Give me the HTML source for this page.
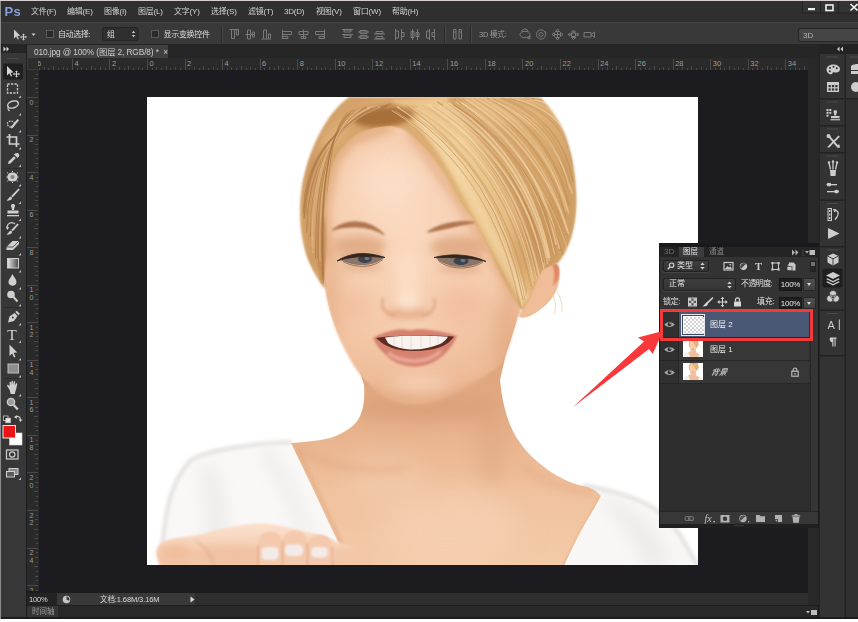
<!DOCTYPE html>
<html lang="zh-CN">
<head>
<meta charset="utf-8">
<title>Photoshop</title>
<style>
*{box-sizing:border-box;margin:0;padding:0}
html,body{width:858px;height:622px;overflow:hidden;background:#1c1b1f}
body{position:relative;font-family:"Liberation Sans","Noto Sans CJK SC",sans-serif;font-size:8px;color:#d6d6d6;line-height:1}
.abs{position:absolute}
#menubar,#tabbar,#statusbar,#timeline,#layers{will-change:transform}
#toolbar svg,#dock svg,#optbar svg{filter:blur(0.3px)}
#topline{left:0;top:0;width:858px;height:1px;background:#d8d0d0}
#menubar{left:0;top:1px;width:858px;height:21px;background:#2e2f2e}
#menubar span{position:absolute;top:7px;font-size:8px;color:#d2d2d2;white-space:nowrap;letter-spacing:-0.2px}
#ps{left:4.5px;top:4px;font-size:13px;font-weight:bold;color:#869fdb;letter-spacing:0.3px;font-family:"Liberation Sans",sans-serif}
#optbar{left:0;top:22px;width:858px;height:23px;background:#393939;border-top:1px solid #444;border-bottom:1px solid #252525}
#tabbar{left:27px;top:45px;width:792px;height:13px;background:#262626}
#tab{left:0;top:0px;width:141px;height:13px;background:#404040;font-size:8.3px;color:#cfcfcf;white-space:nowrap;padding:3px 0 0 7px;letter-spacing:-0.1px}
#hruler{left:27px;top:58px;width:781px;height:12px;background:#2a2a2a;overflow:hidden}
#vruler{left:27px;top:70px;width:12px;height:521px;background:#2a2a2a;overflow:hidden}
#canvas{left:38px;top:70px;width:770px;height:521px;background:#1c1b1f}
#toolbar{left:0;top:45px;width:26px;height:572px;background:#373737}
#toolhead{left:0;top:0;width:26px;height:8px;background:#252525}
#statusbar{left:27px;top:592.5px;width:781px;height:12px;background:#2e2e2e}
#timeline{left:27px;top:604.5px;width:791px;height:12.5px;background:#282828;border-top:1px solid #1e1e1e}
#bottom{left:0;top:617px;width:858px;height:5px;background:#fff;border-top:2.5px solid #1c1c1c}
#vscroll{left:808px;top:58px;width:11px;height:547px;background:#282828}
#dock{left:819px;top:45px;width:39px;height:572px;background:#242424}
#photo{left:147px;top:97px;width:551px;height:468px;background:#fff;overflow:hidden}
#layers{left:659px;top:243px;width:160px;height:285px;background:#2e2e2f;border:1px solid #1a1a1a}
</style>
</head>
<body>
<div class="abs" id="canvas"></div>
<div class="abs" id="photo"><svg width="551" height="468" viewBox="147 97 551 468" style="position:absolute;left:0;top:0">
<defs>
<filter id="b05" x="-5%" y="-5%" width="110%" height="110%"><feGaussianBlur stdDeviation="0.55"/></filter>
<filter id="b1" x="-20%" y="-20%" width="140%" height="140%"><feGaussianBlur stdDeviation="0.8"/></filter>
<filter id="b2" x="-40%" y="-60%" width="180%" height="220%"><feGaussianBlur stdDeviation="1.6"/></filter>
<filter id="b3" x="-20%" y="-20%" width="140%" height="140%"><feGaussianBlur stdDeviation="2.5"/></filter>
<filter id="b4" x="-50%" y="-150%" width="200%" height="400%"><feGaussianBlur stdDeviation="4"/></filter>
<filter id="b8" x="-60%" y="-100%" width="220%" height="300%"><feGaussianBlur stdDeviation="8"/></filter>
<filter id="b14" x="-50%" y="-50%" width="200%" height="200%"><feGaussianBlur stdDeviation="14"/></filter>
<linearGradient id="gHair" x1="0" y1="0" x2="1" y2="0.45">
<stop offset="0" stop-color="#cf9b64"/><stop offset="0.3" stop-color="#d9a970"/><stop offset="0.65" stop-color="#e0b47a"/><stop offset="1" stop-color="#d3a46a"/>
</linearGradient>
<linearGradient id="gFringe" x1="0" y1="0" x2="1" y2="0.3">
<stop offset="0" stop-color="#e8bf84"/><stop offset="0.45" stop-color="#f0cd97"/><stop offset="1" stop-color="#e2b67c"/>
</linearGradient>
<linearGradient id="gNeck" gradientUnits="userSpaceOnUse" x1="0" y1="380" x2="0" y2="565">
<stop offset="0" stop-color="#e0a77f"/><stop offset="0.3" stop-color="#e8b48e"/><stop offset="0.6" stop-color="#f0c29e"/><stop offset="1" stop-color="#f4caa8"/>
</linearGradient>
<radialGradient id="gFace" gradientUnits="userSpaceOnUse" cx="405" cy="225" r="190">
<stop offset="0" stop-color="#fad9c0"/><stop offset="0.55" stop-color="#f5cbab"/><stop offset="1" stop-color="#eab48f"/>
</radialGradient>
<linearGradient id="gHand" gradientUnits="userSpaceOnUse" x1="0" y1="523" x2="0" y2="565">
<stop offset="0" stop-color="#fbe2cf"/><stop offset="1" stop-color="#f2c4a5"/>
</linearGradient>
<clipPath id="cpPhoto"><rect x="147" y="97" width="551" height="468"/></clipPath>

<clipPath id="cpFace"><path d="M326,205 C328,186 331,171 335,161 C340,151 346,144 351,140 C357,135 363,132 369,130 C377,127 385,126 391,126 C397,127 402,128 406,131 C414,138 423,147 431,157 C437,165 442,172 446,178 C450,186 453,192 457,199 C462,207 466,212 471,218 C478,230 484,242 490,253 C494,262 498,270 502,278 C507,287 512,295 517,303 L521,312 L517,319 C514,330 510,343 506,354 C503,362 498,368 490,372 C480,379 470,384 460,389 C450,395 440,399 428,402 C418,404 408,404 400,402 C392,400 386,397 380,392 C373,387 367,382 362,377 C358,372 355,368 352,363 C348,356 344,348 341,342 C338,335 335,328 333,321 C330,312 328,304 326,294 C324,280 325,268 326,258 C327,240 326,222 326,205 Z"/></clipPath>
<clipPath id="cpHair"><path d="M349,97 C338,105 329,116 322,129 C315,141 309,156 305,172 C300,190 299,210 301,230 C303,245 306,256 311,266 C315,275 319,281 324,288 C325,278 325,268 326,258 C327,240 326,222 326,205 C328,186 331,171 335,161 C340,151 346,144 351,140 C357,135 363,132 369,130 C377,127 385,126 391,126 C397,127 402,128 406,131 C414,138 423,147 431,157 C437,165 442,172 446,178 C450,186 453,192 457,199 C462,207 466,212 471,218 C478,230 484,242 490,253 C494,262 498,270 502,278 C507,287 512,295 517,303 L522,310 C530,300 536,280 542,270 C548,266 554,264 558,263 C564,256 569,246 572,234 C576,220 577,205 576,190 C575,170 571,150 565,134 C559,120 551,108 540,97 Z"/></clipPath>
<clipPath id="cpNeck"><path d="M350,340 L364,385 C365,398 364,410 358,420 C352,428 342,434 330,438 C318,441 304,442 291,443 C300,462 312,486 322,508 C332,530 342,550 350,566 L564,566 C570,552 578,536 586,522 C592,512 597,503 601,496 C596,490 590,487 583,486 C570,483 558,477 548,470 C536,461 526,452 518,440 C510,428 505,412 502,396 L500,380 L506,354 L517,319 L480,300 Z"/></clipPath>
</defs>
<g clip-path="url(#cpPhoto)">
<rect x="147" y="97" width="551" height="468" fill="#ffffff"/>
<g filter="url(#b05)">
<path d="M161,566 C162,545 164,525 168,505 C172,488 180,472 190,461 C202,452 228,448 252,445 C268,443 280,442.500 292,442 L352,566 Z" fill="#f9f8f7"/>
<path d="M583,485 C600,488 620,493 638,500 C655,507 668,518 678,532 C686,544 692,556 698,566 L560,566 L602,496 Z" fill="#f8f7f6"/>
<path d="M161,566 C162,545 164,525 168,505 C172,488 180,472 190,461 C202,452 228,448 252,445 C268,443 280,442.500 292,442" stroke="#e4e2e0" stroke-width="5" fill="none" opacity="0.8" filter="url(#b2)"/>
<path d="M583,485 C600,488 620,493 638,500 C655,507 668,518 678,532 C686,544 692,556 698,566" stroke="#e4e2e0" stroke-width="5" fill="none" opacity="0.8" filter="url(#b2)"/>
<path d="M196,470 C206,495 208,530 200,566 L226,566 C232,530 228,495 216,465 Z" fill="#efedeb" filter="url(#b8)"/>
<path d="M255,450 C275,480 290,510 300,540 L316,540 C303,500 290,470 273,448 Z" fill="#f1efed" filter="url(#b8)"/>
<path d="M600,500 C620,520 636,540 644,566 L672,566 C660,535 640,510 606,498 Z" fill="#edebe9" filter="url(#b8)"/>
<path d="M350,340 L364,385 C365,398 364,410 358,420 C352,428 342,434 330,438 C318,441 304,442 291,443 C300,462 312,486 322,508 C332,530 342,550 350,566 L564,566 C570,552 578,536 586,522 C592,512 597,503 601,496 C596,490 590,487 583,486 C570,483 558,477 548,470 C536,461 526,452 518,440 C510,428 505,412 502,396 L500,380 L506,354 L517,319 L480,300 Z" fill="url(#gNeck)"/>
<g clip-path="url(#cpNeck)">
<ellipse cx="425" cy="408" rx="75" ry="13" fill="#d59a72" opacity="0.6" filter="url(#b8)"/>
<ellipse cx="492" cy="440" rx="16" ry="45" fill="#dca47c" opacity="0.45" filter="url(#b8)"/>
<ellipse cx="450" cy="530" rx="70" ry="40" fill="#f7d2b4" opacity="0.7" filter="url(#b14)"/>
<ellipse cx="385" cy="480" rx="40" ry="25" fill="#f4cdae" opacity="0.6" filter="url(#b14)"/>
<path d="M296,448 C325,466 360,474 405,468" stroke="#dca079" stroke-width="5" fill="none" opacity="0.55" filter="url(#b4)"/>
<path d="M594,492 C565,490 540,480 522,466" stroke="#dca079" stroke-width="5" fill="none" opacity="0.5" filter="url(#b4)"/>
<path d="M352,566 L298,450" stroke="#dfa780" stroke-width="4" fill="none" opacity="0.5" filter="url(#b2)"/>
<path d="M564,566 L600,498" stroke="#dfa780" stroke-width="4" fill="none" opacity="0.5" filter="url(#b2)"/>
</g>
<path d="M522,310 C528,292 536,274 546,266 C552,262 558,262 559,268 C561,278 558,290 552,298 C546,306 538,312 530,316 C526,318 522,318 519,317 Z" fill="#efbd98"/>
<path d="M552,264 C557,262 560,266 559,274 C558,280 556,284 553,286 C555,278 555,270 552,264 Z" fill="#e08364" filter="url(#b1)"/>
<path d="M556,290 C560,296 563,304 562,312 M553,296 C556,302 556,308 554,314" stroke="#e5c39a" stroke-width="0.9" fill="none" opacity="0.7"/>
<path d="M349,97 C338,105 329,116 322,129 C315,141 309,156 305,172 C300,190 299,210 301,230 C303,245 306,256 311,266 C315,275 319,281 324,288 L522,310 C530,300 536,280 542,270 C548,266 554,264 558,263 C564,256 569,246 572,234 C576,220 577,205 576,190 C575,170 571,150 565,134 C559,120 551,108 540,97 Z" fill="url(#gHair)" filter="url(#b1)"/>
<path d="M326,205 C328,186 331,171 335,161 C340,151 346,144 351,140 C357,135 363,132 369,130 C377,127 385,126 391,126 C397,127 402,128 406,131 C414,138 423,147 431,157 C437,165 442,172 446,178 C450,186 453,192 457,199 C462,207 466,212 471,218 C478,230 484,242 490,253 C494,262 498,270 502,278 C507,287 512,295 517,303 L521,312 L517,319 C514,330 510,343 506,354 C503,362 498,368 490,372 C480,379 470,384 460,389 C450,395 440,399 428,402 C418,404 408,404 400,402 C392,400 386,397 380,392 C373,387 367,382 362,377 C358,372 355,368 352,363 C348,356 344,348 341,342 C338,335 335,328 333,321 C330,312 328,304 326,294 C324,280 325,268 326,258 C327,240 326,222 326,205 Z" fill="url(#gFace)" filter="url(#b1)"/>
<g clip-path="url(#cpFace)">
<ellipse cx="328" cy="290" rx="12" ry="60" fill="#dfa47a" opacity="0.55" filter="url(#b8)"/>
<ellipse cx="508" cy="345" rx="14" ry="50" fill="#dfa47b" opacity="0.55" filter="url(#b8)"/>
<ellipse cx="425" cy="400" rx="70" ry="10" fill="#dfa47b" opacity="0.6" filter="url(#b8)"/>
<ellipse cx="388" cy="182" rx="36" ry="30" fill="#fde2cc" opacity="0.7" filter="url(#b14)"/>
<ellipse cx="408" cy="280" rx="10" ry="32" fill="#fde2cb" opacity="0.85" filter="url(#b8)"/>
<ellipse cx="462" cy="305" rx="24" ry="18" fill="#f0b595" opacity="0.5" filter="url(#b8)"/>
<ellipse cx="354" cy="305" rx="16" ry="16" fill="#f0b595" opacity="0.45" filter="url(#b8)"/>
<ellipse cx="420" cy="384" rx="30" ry="9" fill="#fad9c1" opacity="0.7" filter="url(#b8)"/>
<ellipse cx="412" cy="322" rx="22" ry="5" fill="#fbdcc5" opacity="0.6" filter="url(#b4)"/>
<ellipse cx="360" cy="246" rx="26" ry="11" fill="#dca37c" opacity="0.75" filter="url(#b4)"/>
<ellipse cx="458" cy="247" rx="28" ry="11" fill="#dca37c" opacity="0.75" filter="url(#b4)"/>
<ellipse cx="362" cy="266" rx="20" ry="5" fill="#d69c76" opacity="0.6" filter="url(#b4)"/>
<ellipse cx="460" cy="268" rx="22" ry="5" fill="#d69c76" opacity="0.6" filter="url(#b4)"/>
<path d="M410,132 L457,199 L490,253 L517,303" stroke="#e2a57c" stroke-width="9" fill="none" opacity="0.65" filter="url(#b4)"/>
<path d="M325,260 L325,205 L334,162 L351,140 L391,126" stroke="#dda574" stroke-width="10" fill="none" opacity="0.75" filter="url(#b4)"/>
</g>
<path d="M372,384 C375,388 377,390 380,392 C392,400 408,404 428,402 C445,398 465,387 486,375" stroke="#e6b08a" stroke-width="5" fill="none" opacity="0.7" filter="url(#b3)"/>
<g clip-path="url(#cpHair)">
<path d="M392,100 C420,125 445,160 460,190 C478,225 500,265 522,308 L552,290 C540,255 522,210 500,170 C484,140 462,115 446,97 Z" fill="url(#gFringe)" filter="url(#b2)"/>
<path d="M452,97 C476,125 500,165 518,205 C532,235 545,262 553,288" stroke="#c48f56" stroke-width="13" fill="none" opacity="0.55" filter="url(#b4)"/>
<path d="M420,118 C445,145 470,190 490,230 C503,256 515,280 526,300" stroke="#f6dcae" stroke-width="9" fill="none" opacity="0.6" filter="url(#b3)"/>
<ellipse cx="384" cy="117" rx="30" ry="10" fill="#a56c38" opacity="0.95" filter="url(#b3)" transform="rotate(-6 384 117)"/>
<ellipse cx="313" cy="215" rx="8" ry="62" fill="#c48c58" opacity="0.55" filter="url(#b4)"/>
<ellipse cx="322" cy="250" rx="4" ry="35" fill="#b67c4a" opacity="0.6" filter="url(#b2)"/>
<ellipse cx="335" cy="135" rx="18" ry="8" fill="#e2b580" opacity="0.7" filter="url(#b4)" transform="rotate(-50 335 135)"/>
<ellipse cx="540" cy="235" rx="22" ry="40" fill="#c8935a" opacity="0.7" filter="url(#b8)" transform="rotate(15 540 235)"/>
<ellipse cx="525" cy="160" rx="26" ry="50" fill="#d2a068" opacity="0.55" filter="url(#b8)" transform="rotate(-30 525 160)"/>
<ellipse cx="569" cy="200" rx="7" ry="45" fill="#cf9d66" opacity="0.7" filter="url(#b4)"/>
<ellipse cx="500" cy="112" rx="45" ry="10" fill="#e6bd86" opacity="0.6" filter="url(#b4)" transform="rotate(12 500 112)"/>
<g filter="url(#b05)">
<path d="M391.7,110.4 Q495.1,174.0 522.5,305.7" stroke="#f6dcb0" stroke-width="1.1" fill="none" opacity="0.63"/>
<path d="M393.9,110.5 Q494.3,173.4 519.3,303.8" stroke="#b98550" stroke-width="1.2" fill="none" opacity="0.42"/>
<path d="M395.7,111.0 Q496.9,174.0 523.2,303.8" stroke="#f3d6a6" stroke-width="1.0" fill="none" opacity="0.42"/>
<path d="M396.5,106.5 Q497.0,170.2 523.2,300.3" stroke="#f6dcb0" stroke-width="1.2" fill="none" opacity="0.45"/>
<path d="M397.0,106.6 Q498.1,169.5 525.5,298.2" stroke="#f3d6a6" stroke-width="1.8" fill="none" opacity="0.46"/>
<path d="M400.4,107.6 Q498.3,171.3 523.1,300.1" stroke="#b27c48" stroke-width="1.0" fill="none" opacity="0.59"/>
<path d="M406.1,105.6 Q501.9,170.4 525.1,299.8" stroke="#c7955c" stroke-width="1.0" fill="none" opacity="0.47"/>
<path d="M404.2,109.4 Q501.6,168.8 527.0,292.1" stroke="#c7955c" stroke-width="1.3" fill="none" opacity="0.34"/>
<path d="M406.5,105.8 Q502.2,168.8 526.5,295.3" stroke="#c08c55" stroke-width="1.1" fill="none" opacity="0.36"/>
<path d="M411.4,105.7 Q506.7,164.8 531.1,286.7" stroke="#c08c55" stroke-width="0.7" fill="none" opacity="0.56"/>
<path d="M414.8,108.3 Q509.8,165.0 534.4,284.1" stroke="#b98550" stroke-width="0.7" fill="none" opacity="0.34"/>
<path d="M413.6,104.5 Q508.3,166.6 533.2,290.4" stroke="#b98550" stroke-width="0.8" fill="none" opacity="0.47"/>
<path d="M414.5,107.9 Q508.3,165.8 532.9,285.0" stroke="#efcf9c" stroke-width="2.0" fill="none" opacity="0.40"/>
<path d="M417.3,107.8 Q509.8,164.1 533.7,281.0" stroke="#f6dcb0" stroke-width="1.1" fill="none" opacity="0.61"/>
<path d="M422.6,105.0 Q514.7,165.4 538.7,285.8" stroke="#efcf9c" stroke-width="1.0" fill="none" opacity="0.39"/>
<path d="M422.1,105.1 Q514.0,162.4 538.6,279.2" stroke="#c7955c" stroke-width="0.9" fill="none" opacity="0.35"/>
<path d="M425.3,103.8 Q514.4,162.0 536.7,279.2" stroke="#f6dcb0" stroke-width="1.0" fill="none" opacity="0.42"/>
<path d="M428.5,107.6 Q515.8,162.6 536.8,276.0" stroke="#b98550" stroke-width="0.8" fill="none" opacity="0.41"/>
<path d="M428.4,103.7 Q516.9,162.5 539.7,279.1" stroke="#f6dcb0" stroke-width="1.9" fill="none" opacity="0.53"/>
<path d="M432.7,106.2 Q521.0,161.1 544.3,273.2" stroke="#b27c48" stroke-width="1.5" fill="none" opacity="0.31"/>
<path d="M432.8,105.3 Q520.8,159.3 544.2,269.9" stroke="#f3d6a6" stroke-width="1.5" fill="none" opacity="0.48"/>
<path d="M431.3,107.8 Q520.3,159.1 545.4,266.3" stroke="#efcf9c" stroke-width="1.4" fill="none" opacity="0.59"/>
<path d="M438.4,107.2 Q523.2,161.5 544.6,271.2" stroke="#f6dcb0" stroke-width="0.9" fill="none" opacity="0.58"/>
<path d="M437.3,101.8 Q521.9,154.7 543.7,262.5" stroke="#b27c48" stroke-width="1.4" fill="none" opacity="0.52"/>
<path d="M439.3,105.9 Q524.8,158.0 547.9,264.3" stroke="#f3d6a6" stroke-width="1.6" fill="none" opacity="0.53"/>
<path d="M440.9,101.8 Q524.1,157.9 545.7,267.7" stroke="#c7955c" stroke-width="0.9" fill="none" opacity="0.30"/>
<path d="M442.8,105.1 Q525.9,155.1 547.9,258.1" stroke="#f6dcb0" stroke-width="2.1" fill="none" opacity="0.52"/>
<path d="M444.4,103.3 Q527.2,155.9 549.4,261.1" stroke="#f3d6a6" stroke-width="2.0" fill="none" opacity="0.48"/>
<path d="M448.5,102.5 Q529.2,154.2 549.8,258.0" stroke="#f3d6a6" stroke-width="1.8" fill="none" opacity="0.68"/>
<path d="M448.7,101.4 Q530.5,152.0 552.8,254.0" stroke="#c7955c" stroke-width="1.0" fill="none" opacity="0.46"/>
<path d="M453.0,104.4 Q534.1,154.7 556.3,255.8" stroke="#b98550" stroke-width="0.9" fill="none" opacity="0.48"/>
<path d="M455.1,101.6 Q534.0,152.8 554.6,254.4" stroke="#f6dcb0" stroke-width="1.1" fill="none" opacity="0.51"/>
<path d="M453.1,104.7 Q532.9,151.3 555.0,247.6" stroke="#b98550" stroke-width="1.1" fill="none" opacity="0.49"/>
<path d="M458.9,104.3 Q538.3,153.2 560.5,251.3" stroke="#c7955c" stroke-width="0.9" fill="none" opacity="0.51"/>
<path d="M461.5,102.4 Q537.1,149.4 556.1,245.0" stroke="#f6dcb0" stroke-width="1.8" fill="none" opacity="0.53"/>
<path d="M462.7,103.5 Q539.0,152.2 559.4,248.9" stroke="#f3d6a6" stroke-width="1.4" fill="none" opacity="0.66"/>
<path d="M454.3,98.4 Q532.8,156.5 563.2,254.6" stroke="#b27c48" stroke-width="1.0" fill="none" opacity="0.50"/>
<path d="M455.8,99.2 Q535.6,153.5 567.3,247.8" stroke="#f3d6a6" stroke-width="1.1" fill="none" opacity="0.37"/>
<path d="M457.7,97.9 Q537.2,152.7 568.6,247.4" stroke="#b98550" stroke-width="0.9" fill="none" opacity="0.32"/>
<path d="M462.4,98.7 Q539.1,148.4 567.8,238.2" stroke="#b98550" stroke-width="1.0" fill="none" opacity="0.31"/>
<path d="M465.5,99.1 Q541.3,146.6 569.0,234.2" stroke="#f6dcb0" stroke-width="1.4" fill="none" opacity="0.45"/>
<path d="M467.5,99.6 Q541.5,146.3 567.4,232.9" stroke="#efcf9c" stroke-width="1.4" fill="none" opacity="0.34"/>
<path d="M471.9,98.9 Q543.7,144.9 567.5,230.9" stroke="#efcf9c" stroke-width="1.5" fill="none" opacity="0.54"/>
<path d="M475.3,98.8 Q544.9,138.7 566.5,218.6" stroke="#b27c48" stroke-width="1.1" fill="none" opacity="0.36"/>
<path d="M475.9,98.5 Q546.3,135.9 568.7,213.4" stroke="#f6dcb0" stroke-width="1.7" fill="none" opacity="0.41"/>
<path d="M481.2,97.4 Q547.6,134.3 566.0,211.2" stroke="#efcf9c" stroke-width="1.3" fill="none" opacity="0.54"/>
<path d="M483.3,97.8 Q550.0,132.3 568.7,206.8" stroke="#c7955c" stroke-width="1.1" fill="none" opacity="0.33"/>
<path d="M482.9,97.1 Q549.4,133.5 567.8,209.8" stroke="#f3d6a6" stroke-width="1.1" fill="none" opacity="0.32"/>
<path d="M487.1,98.0 Q551.9,131.5 568.8,205.0" stroke="#b98550" stroke-width="1.3" fill="none" opacity="0.49"/>
<path d="M489.9,99.1 Q555.1,126.5 572.3,194.0" stroke="#f6dcb0" stroke-width="1.5" fill="none" opacity="0.41"/>
<path d="M493.3,98.6 Q555.0,125.5 568.7,192.4" stroke="#c08c55" stroke-width="0.9" fill="none" opacity="0.52"/>
<path d="M495.6,99.7 Q556.6,124.7 569.7,189.7" stroke="#f3d6a6" stroke-width="1.6" fill="none" opacity="0.31"/>
<path d="M493.9,99.7 Q555.4,121.4 569.0,183.1" stroke="#c7955c" stroke-width="1.3" fill="none" opacity="0.43"/>
<path d="M500.6,97.4 Q559.8,121.9 571.0,186.4" stroke="#c08c55" stroke-width="1.1" fill="none" opacity="0.41"/>
<path d="M503.4,98.1 Q562.3,120.0 573.2,181.9" stroke="#c08c55" stroke-width="1.3" fill="none" opacity="0.44"/>
<path d="M501.2,99.3 Q561.1,120.3 573.0,181.3" stroke="#c08c55" stroke-width="0.8" fill="none" opacity="0.36"/>
<path d="M508.7,100.0 Q566.0,113.8 575.3,167.7" stroke="#c7955c" stroke-width="0.8" fill="none" opacity="0.33"/>
<path d="M508.5,98.3 Q564.4,111.8 572.3,165.2" stroke="#b98550" stroke-width="1.3" fill="none" opacity="0.35"/>
<path d="M511.5,99.2 Q566.2,110.2 572.9,161.2" stroke="#b98550" stroke-width="0.9" fill="none" opacity="0.33"/>
<path d="M516.4,99.6 Q570.4,112.9 576.4,166.2" stroke="#f3d6a6" stroke-width="1.4" fill="none" opacity="0.54"/>
<path d="M518.8,97.8 Q571.8,108.9 576.8,160.0" stroke="#efcf9c" stroke-width="1.0" fill="none" opacity="0.35"/>
<path d="M519.7,98.1 Q571.0,103.8 574.3,149.4" stroke="#c08c55" stroke-width="0.7" fill="none" opacity="0.40"/>
<path d="M521.9,97.0 Q572.1,104.0 574.2,151.0" stroke="#f3d6a6" stroke-width="1.1" fill="none" opacity="0.54"/>
<path d="M523.5,97.6 Q573.2,99.7 574.9,141.7" stroke="#c7955c" stroke-width="1.1" fill="none" opacity="0.51"/>
<path d="M528.8,99.9 Q574.9,101.5 573.0,143.0" stroke="#efcf9c" stroke-width="1.3" fill="none" opacity="0.40"/>
<path d="M531.4,98.9 Q576.3,96.9 573.3,134.8" stroke="#b27c48" stroke-width="1.1" fill="none" opacity="0.45"/>
<path d="M535.2,98.7 Q581.4,97.1 579.6,135.5" stroke="#f3d6a6" stroke-width="1.4" fill="none" opacity="0.45"/>
<path d="M537.7,98.2 Q582.7,93.4 579.6,128.6" stroke="#efcf9c" stroke-width="1.4" fill="none" opacity="0.43"/>
<path d="M391.7,104.0 Q305.1,129.0 303.1,213.8" stroke="#9f6a3a" stroke-width="0.9" fill="none" opacity="0.50"/>
<path d="M390.3,103.5 Q307.5,128.5 305.8,215.6" stroke="#a9723f" stroke-width="1.1" fill="none" opacity="0.49"/>
<path d="M387.7,105.4 Q305.4,130.4 304.1,218.9" stroke="#9f6a3a" stroke-width="1.4" fill="none" opacity="0.58"/>
<path d="M384.4,106.7 Q307.5,131.7 306.6,223.9" stroke="#e3b884" stroke-width="0.9" fill="none" opacity="0.33"/>
<path d="M385.4,107.0 Q307.0,132.0 306.4,232.7" stroke="#9f6a3a" stroke-width="0.8" fill="none" opacity="0.49"/>
<path d="M382.0,104.6 Q307.3,129.6 307.0,230.6" stroke="#b27a48" stroke-width="0.8" fill="none" opacity="0.43"/>
<path d="M380.7,106.6 Q310.4,131.6 310.5,231.6" stroke="#e3b884" stroke-width="1.7" fill="none" opacity="0.52"/>
<path d="M377.3,104.9 Q311.8,129.9 312.3,239.7" stroke="#e8c090" stroke-width="1.1" fill="none" opacity="0.48"/>
<path d="M377.2,107.6 Q309.6,132.6 310.4,236.7" stroke="#a9723f" stroke-width="1.1" fill="none" opacity="0.50"/>
<path d="M373.2,107.9 Q312.0,132.9 313.1,236.5" stroke="#a9723f" stroke-width="1.1" fill="none" opacity="0.33"/>
<path d="M372.6,105.8 Q310.4,130.8 311.9,247.6" stroke="#e8c090" stroke-width="1.3" fill="none" opacity="0.41"/>
<path d="M369.8,107.8 Q311.2,132.8 313.1,252.9" stroke="#e8c090" stroke-width="1.5" fill="none" opacity="0.49"/>
<path d="M369.6,107.0 Q313.0,132.0 315.2,248.6" stroke="#e8c090" stroke-width="1.0" fill="none" opacity="0.55"/>
<path d="M367.0,107.7 Q314.9,132.7 317.5,258.5" stroke="#9f6a3a" stroke-width="1.0" fill="none" opacity="0.33"/>
<path d="M366.1,107.2 Q312.9,132.2 315.7,258.4" stroke="#9f6a3a" stroke-width="1.0" fill="none" opacity="0.55"/>
<path d="M360.7,108.5 Q316.8,133.5 320.0,261.9" stroke="#e8c090" stroke-width="1.5" fill="none" opacity="0.51"/>
<path d="M359.8,108.1 Q315.2,133.1 318.7,266.4" stroke="#a9723f" stroke-width="0.9" fill="none" opacity="0.43"/>
<path d="M359.1,111.5 Q317.1,136.5 321.0,264.1" stroke="#b27a48" stroke-width="1.0" fill="none" opacity="0.37"/>
<path d="M358.7,111.2 Q317.0,136.2 321.3,264.8" stroke="#e3b884" stroke-width="1.2" fill="none" opacity="0.42"/>
<path d="M354.4,109.4 Q317.8,134.4 322.4,276.4" stroke="#9f6a3a" stroke-width="1.1" fill="none" opacity="0.35"/>
<path d="M353.9,112.5 Q317.3,137.5 322.3,270.1" stroke="#9f6a3a" stroke-width="0.8" fill="none" opacity="0.39"/>
<path d="M349.0,112.7 Q318.5,137.7 323.8,279.9" stroke="#9f6a3a" stroke-width="0.8" fill="none" opacity="0.32"/>
<path d="M349.9,113.2 Q317.7,138.2 323.4,283.6" stroke="#9f6a3a" stroke-width="1.3" fill="none" opacity="0.43"/>
<path d="M347.8,112.0 Q321.6,137.0 327.6,283.1" stroke="#b27a48" stroke-width="0.9" fill="none" opacity="0.59"/>
</g>
</g>
<path d="M332.5,230 C340,224 350,221.5 358,222 C368,222.5 377,227 384,234.5 C376,230 367,227.5 358,227 C349,226.5 340,227.5 332.5,230 Z" fill="#b0764f" stroke="#b0764f" stroke-width="1.2" stroke-linejoin="round" filter="url(#b1)"/>
<path d="M428,232 C436,226.5 446,223.5 455,222.5 C462,221.5 468,221.5 474,222.5 C466,224 459,225.5 452,227 C444,229 436,230.5 428,232 Z" fill="#b0764f" stroke="#b0764f" stroke-width="1.5" stroke-linejoin="round" filter="url(#b1)"/>
<path d="M338,258 C346,249 358,246 368,247 C376,248 381,252 385,257 C376,254 366,253 358,253.500 C350,254 343,256 338,258 Z" fill="#e2b08b" opacity="0.9" filter="url(#b1)"/>
<path d="M435,257 C443,250 455,247 466,248 C475,249 481,254 486,260 C476,256 467,254.500 458,254.500 C450,254.500 442,255.500 435,257 Z" fill="#e2b08b" opacity="0.9" filter="url(#b1)"/>
<path d="M341,260 C348,255 357,253.500 365,254 C373,254.500 379,256 384,258 C378,262.500 371,265 363,265 C354,265 347,263.500 341,260 Z" fill="#8a7468" filter="url(#b05)"/>
<path d="M436,258.500 C443,256 451,255 459,255.500 C468,256 477,258 483,261 C477,265 469,267 461,267 C452,267 443,264 436,258.500 Z" fill="#8a7468" filter="url(#b05)"/>
<ellipse cx="365" cy="259" rx="7" ry="4" fill="#3c434e"/>
<ellipse cx="461" cy="261" rx="7.500" ry="4" fill="#3c434e"/>
<ellipse cx="367" cy="258.500" rx="2.500" ry="1.800" fill="#6a7684"/>
<ellipse cx="463" cy="260.500" rx="2.500" ry="1.800" fill="#6a7684"/>
<path d="M337,261 C345,255.500 356,253 365,253.500 C373,254 379,255.500 385,257.500 C379,257 372,256.500 365,256.500 C356,256.500 346,258 337,261 Z" fill="#35261f" stroke="#35261f" stroke-width="0.800"/>
<path d="M434,257.500 C442,255.500 451,254.500 459,255 C469,255.500 478,257.500 486,261.500 C478,259.500 469,258 459,257.800 C451,257.500 442,257.500 434,257.500 Z" fill="#35261f" stroke="#35261f" stroke-width="0.800"/>
<path d="M343,261.500 C350,265.500 358,266.500 365,266.300 C372,266 378,263.500 383,259.500" stroke="#6b4a3a" stroke-width="0.900" fill="none" opacity="0.700"/>
<path d="M438,260.500 C445,266 453,268 461,268 C469,268 477,266 483,262" stroke="#6b4a3a" stroke-width="0.900" fill="none" opacity="0.700"/>
<ellipse cx="408" cy="314" rx="22" ry="4.500" fill="#d99873" opacity="0.7" filter="url(#b4)"/>
<path d="M383,298 C380,308 386,315 396,315" stroke="#da9c78" stroke-width="3" fill="none" opacity="0.65" filter="url(#b2)"/>
<path d="M434,298 C437,308 431,315 421,315" stroke="#da9c78" stroke-width="3" fill="none" opacity="0.55" filter="url(#b2)"/>
<ellipse cx="408" cy="300" rx="11" ry="9" fill="#fde3cd" opacity="0.8" filter="url(#b4)"/>
<path d="M373,338 C380,334 390,330.5 400,329.3 C404,328.800 407,329.800 411,330.300 C414,329.500 418,328.900 423,329.300 C436,330.200 448,333 457,336 C453,346 446,354 437,360 C430,364.5 422,366.5 414,366.5 C404,366.5 395,363 388,357 C381,351 376,345 373,338 Z" fill="#d6826e" filter="url(#b1)"/>
<path d="M376,338 C385,336.500 398,335.500 411,335.500 C426,335.500 442,335.500 454,336.500 C451,341 447,344 443,346 C437,349 425,351 412,351 C400,351 389,348 382,343 Z" fill="#5e2a22"/>
<path d="M385,337.500 C393,336.300 402,335.800 411,335.800 C424,335.800 438,336 448,336.800 C446,340 443,342.500 440,344 C432,347.500 422,349.500 413,349.500 C403,349.500 394,347 388,343 Z" fill="#f8f3ee"/>
<path d="M394,337 V345.500 M402,336.500 V348 M411,336.500 V349.500 M421,336.500 V348.500 M430,336.500 V346.500 M438,336.500 V344.500" stroke="#d9cfc6" stroke-width="0.8" opacity="0.8"/>
<path d="M388,353 C396,359 404,361 414,361 C424,361 434,357.500 441,351" stroke="#efb6a7" stroke-width="3.500" fill="none" opacity="0.85" filter="url(#b2)"/>
<path d="M157,556 C155,548 160,541 172,539 C184,536.500 196,535.500 207,533 C218,529 236,525 252,523.800 C266,523 278,525 286,527 C296,529 304,531 312,533 C322,535 330,538 337,542 C350,544 362,551 372,560 L374,566 L160,566 Z" fill="url(#gHand)" filter="url(#b1)"/>
<ellipse cx="230" cy="553" rx="38" ry="8" fill="#edba97" opacity="0.6" filter="url(#b4)"/>
<ellipse cx="176" cy="553" rx="17" ry="9" fill="#f0bc9a" opacity="0.85" filter="url(#b4)"/>
<path d="M196,541 C204,546 210,552 214,566" stroke="#e0a986" stroke-width="2.500" fill="none" opacity="0.5" filter="url(#b2)"/>
<path d="M258.0,566 V543.0 C258.0,528.0 282.5,528.0 282.5,543.0 V566 Z" fill="#f4c9ad" filter="url(#b1)"/>
<path d="M282.5,566 V542.0 C282.5,527.0 307.0,527.0 307.0,542.0 V566 Z" fill="#f4c9ad" filter="url(#b1)"/>
<path d="M307.5,566 V546.0 C307.5,531.0 332.0,531.0 332.0,546.0 V566 Z" fill="#f4c9ad" filter="url(#b1)"/>
<path d="M282.500,541 V566 M307.500,543 V566 M258,545 V566 M332.500,547 V566" stroke="#dba07d" stroke-width="1.800" opacity="0.6" filter="url(#b1)" fill="none"/>
<ellipse cx="353" cy="557" rx="20" ry="11" fill="#f3c7a8" opacity="0.9" filter="url(#b3)"/>
<rect x="261.5" y="547.0" width="17.0" height="13.0" rx="4.500" ry="4.500" fill="#f3ebe8" filter="url(#b1)"/>
<rect x="285.0" y="544.5" width="18.0" height="11.5" rx="4.500" ry="4.500" fill="#f3ebe8" filter="url(#b1)"/>
<rect x="311.0" y="547.0" width="17.0" height="10.5" rx="4.500" ry="4.500" fill="#f3ebe8" filter="url(#b1)"/>
</g>
</g>
</svg></div>
<svg width="858" height="622" viewBox="0 0 858 622" style="position:absolute;left:0;top:0;pointer-events:none;z-index:20">
<polygon points="572.5,407.5 644,341.5 638,337.5 663,331 652.7,354 649,349" fill="#f8383a"/>
</svg>

<div class="abs" id="topline"></div>
<div class="abs" id="menubar">
  <div class="abs" id="ps">Ps</div>
  <span style="left:31px">文件(F)</span>
  <span style="left:67px">编辑(E)</span>
  <span style="left:104px">图像(I)</span>
  <span style="left:138px">图层(L)</span>
  <span style="left:174px">文字(Y)</span>
  <span style="left:211px">选择(S)</span>
  <span style="left:248px">滤镜(T)</span>
  <span style="left:284px">3D(D)</span>
  <span style="left:316px">视图(V)</span>
  <span style="left:353px">窗口(W)</span>
  <span style="left:392px">帮助(H)</span>
</div>
<svg class="abs" style="left:802px;top:1px;z-index:3" width="56" height="13" viewBox="802 1 56 13">
<rect x="802.500" y="0.500" width="18" height="12.500" fill="#343434" stroke="#232323"/><rect x="820.500" y="0.500" width="18" height="12.500" fill="#343434" stroke="#232323"/><rect x="838.500" y="0.500" width="20" height="12.500" fill="#343434" stroke="#232323"/>
<rect x="808" y="8" width="7" height="2.200" fill="#f0f0f0"/><rect x="826" y="5" width="7" height="5.500" fill="none" stroke="#f0f0f0" stroke-width="1.600"/><path d="M850.500,4 L857.500,10.500 M857.500,4 L850.500,10.500" stroke="#f0f0f0" stroke-width="1.700"/></svg>
<div class="abs" id="optbar"><svg class="abs" style="left:0;top:-1px" width="858" height="24" viewBox="0 21 858 24">
<!-- move tool icon -->
<path d="M14,28.500 L14,37.500 L16.200,35.400 L17.800,38.500 L19,37.900 L17.500,35 L20.300,34.800Z" fill="#cdcdcd"/>
<path d="M23.500,32.500 L25,34 L24,34 L24,35.500 L25.500,35.500 L25.500,34.500 L27,36 L25.500,37.500 L25.500,36.500 L24,36.500 L24,38 L25,38 L23.500,39.500 L22,38 L23,38 L23,36.500 L21.500,36.500 L21.500,37.500 L20,36 L21.500,34.500 L21.500,35.500 L23,35.500 L23,34 L22,34Z" fill="#cdcdcd"/>
<path d="M31.500,32.500 L35.500,32.500 L33.500,35Z" fill="#cdcdcd"/>
<rect x="46.500" y="29.500" width="7" height="7" fill="#2a2a2a" stroke="#5a5a5a"/>
<rect x="102.500" y="26.500" width="35.500" height="13" rx="2" fill="#2f2f2f" stroke="#242424"/>
<path d="M131.800,32 L133.500,29.800 L135.200,32Z M131.800,34 L133.500,36.200 L135.200,34Z" fill="#cfcfcf"/>
<rect x="151.500" y="29.500" width="7" height="7" fill="#2a2a2a" stroke="#5a5a5a"/>
<path d="M221.500,25 V41" stroke="#2a2a2a"/><path d="M222.500,25 V41" stroke="#484848"/>
<g fill="none" stroke="#7a7a7a" stroke-width="1">
<!-- align group 1 -->
<path d="M229.500,28.500 H239 M231.500,29 V37.500 H234.500 V29 M236.500,29 V34 H238.500 V29" />
<path d="M245.500,33.500 H255 M247.500,29 V38 H250.500 V29Z M252.500,31 V36 H254.500 V31Z"/>
<path d="M261.500,38 H271 M263.500,37.500 V29 H266.500 V37.500 M268.500,37.500 V33 H270.500 V37.500"/>
<!-- group 2 -->
<path d="M282.500,28.500 V38 M283,30.500 H291.500 V33.500 H283 M283,35.500 H288 V37.500 H283"/>
<path d="M303.500,28.500 V38 M299,30.500 H308 V33.500 H299Z M301,35.500 H306 V37.500 H301Z"/>
<path d="M324.500,28.500 V38 M324,30.500 H315.500 V33.500 H324 M324,35.500 H319 V37.500 H324"/>
<!-- group 3 distribute -->
<path d="M342,28.500 H353 M342,33.500 H353 M344,29 H351 V31 H344Z M344,34 H351 V36.500 H344Z"/>
<path d="M358,31 H369 M358,36 H369 M360,29.500 H367 V32.500 H360Z M360,34.500 H367 V37.500 H360Z"/>
<path d="M374,33 H385 M374,38 H385 M376,30.500 H383 V32.500 H376Z M376,35.500 H383 V37.500 H376Z"/>
<!-- group 4 -->
<path d="M395.500,28 V39 M401.500,28 V39 M396,30 H398.500 V37 H396 M402,31.500 H404 V35.500 H402"/>
<path d="M412.500,28 V39 M417.500,28 V39 M411,30.500 H414 V36.500 H411Z M416,31.500 H419 V35.500 H416Z"/>
<path d="M429.500,28 V39 M434.500,28 V39 M429,30 H426.500 V37 H429 M434,31.500 H432 V35.500 H434"/>
<!-- auto align -->
<path d="M453.500,28.500 V38 H456 V28.500Z M459,28.500 V38 H461.500 V28.500Z M453.500,31 H456 M459,31 H461.500"/>
<!-- 3d icons -->
<ellipse cx="525" cy="33.500" rx="5" ry="3.200"/><path d="M522,31.500 A3,3 0 0 1 528,30.500 M527.500,37 L530,35 L530,38Z"/>
<circle cx="541" cy="33.500" r="4.600"/><circle cx="541" cy="33.500" r="2"/><path d="M545,30 L546,32.500"/>
<path d="M557.500,28 L559.500,30.500 L555.500,30.500Z M557.500,39 L559.500,36.500 L555.500,36.500Z M552,33.500 L554.500,31.500 L554.500,35.500Z M563,33.500 L560.500,31.500 L560.500,35.500Z M557.500,30.500 V36.500 M554.500,33.500 H560.500"/>
<path d="M573.500,29 L575.500,31 L571.500,31Z M573.500,38.500 L575.500,36.500 L571.500,36.500Z M568,33.500 L570,32 L570,35Z M579,33.500 L577,32 L577,35Z M571.500,32 H575.500 V35.500 H571.500Z" />
<path d="M584,31.500 H591 V36 H584Z M591,33.500 L594.500,31 V36.500Z"/>
</g>
<path d="M444.500,25 V41" stroke="#2a2a2a"/><path d="M445.500,25 V41" stroke="#484848"/>
<path d="M470.500,25 V41" stroke="#2a2a2a"/><path d="M471.500,25 V41" stroke="#484848"/>
<rect x="798.500" y="27.500" width="62" height="13" rx="2" fill="#454545" stroke="#262626"/>
<g font-family="Liberation Sans,Noto Sans CJK SC,sans-serif" font-size="8">
<text x="58" y="35.800" fill="#dcdcdc" letter-spacing="-0.4">自动选择:</text>
<text x="107" y="35.800" fill="#dcdcdc">组</text>
<text x="163.500" y="35.800" fill="#dcdcdc" letter-spacing="-0.3">显示变换控件</text>
<text x="479" y="35.800" fill="#9c9c9c" font-size="7.500" letter-spacing="-0.2">3D 模式:</text>
<text x="803" y="36.500" fill="#b4b4b4" font-size="8">3D</text>
</g>
</svg>
</div>
<div class="abs" id="tabbar"><div class="abs" id="tab">010.jpg @ 100% (图层 2, RGB/8) * &nbsp;×</div></div>
<div class="abs" id="hruler"><svg class="abs" style="left:0;top:0" width="781" height="12" viewBox="27 58 781 12">
<rect x="27" y="58" width="11" height="12" fill="#303030"/>
<g stroke="#4a4a4a" stroke-width="1">
<path d="M39.5,70 V68.0"/>
<path d="M44.5,70 V67.0"/>
<path d="M48.5,70 V68.0"/>
<path d="M53.5,70 V66.0"/>
<path d="M58.5,70 V68.0"/>
<path d="M63.5,70 V67.0"/>
<path d="M67.5,70 V68.0"/>
<path d="M72.5,70 V59.0"/>
<path d="M77.5,70 V68.0"/>
<path d="M81.5,70 V67.0"/>
<path d="M86.5,70 V68.0"/>
<path d="M91.5,70 V66.0"/>
<path d="M95.5,70 V68.0"/>
<path d="M100.5,70 V67.0"/>
<path d="M105.5,70 V68.0"/>
<path d="M109.5,70 V59.0"/>
<path d="M114.5,70 V68.0"/>
<path d="M119.5,70 V67.0"/>
<path d="M124.5,70 V68.0"/>
<path d="M128.5,70 V66.0"/>
<path d="M133.5,70 V68.0"/>
<path d="M138.5,70 V67.0"/>
<path d="M142.5,70 V68.0"/>
<path d="M147.5,70 V59.0"/>
<path d="M152.5,70 V68.0"/>
<path d="M156.5,70 V67.0"/>
<path d="M161.5,70 V68.0"/>
<path d="M166.5,70 V66.0"/>
<path d="M170.5,70 V68.0"/>
<path d="M175.5,70 V67.0"/>
<path d="M180.5,70 V68.0"/>
<path d="M185.5,70 V59.0"/>
<path d="M189.5,70 V68.0"/>
<path d="M194.5,70 V67.0"/>
<path d="M199.5,70 V68.0"/>
<path d="M203.5,70 V66.0"/>
<path d="M208.5,70 V68.0"/>
<path d="M213.5,70 V67.0"/>
<path d="M217.5,70 V68.0"/>
<path d="M222.5,70 V59.0"/>
<path d="M227.5,70 V68.0"/>
<path d="M231.5,70 V67.0"/>
<path d="M236.5,70 V68.0"/>
<path d="M241.5,70 V66.0"/>
<path d="M246.5,70 V68.0"/>
<path d="M250.5,70 V67.0"/>
<path d="M255.5,70 V68.0"/>
<path d="M260.5,70 V59.0"/>
<path d="M264.5,70 V68.0"/>
<path d="M269.5,70 V67.0"/>
<path d="M274.5,70 V68.0"/>
<path d="M278.5,70 V66.0"/>
<path d="M283.5,70 V68.0"/>
<path d="M288.5,70 V67.0"/>
<path d="M293.5,70 V68.0"/>
<path d="M297.5,70 V59.0"/>
<path d="M302.5,70 V68.0"/>
<path d="M307.5,70 V67.0"/>
<path d="M311.5,70 V68.0"/>
<path d="M316.5,70 V66.0"/>
<path d="M321.5,70 V68.0"/>
<path d="M325.5,70 V67.0"/>
<path d="M330.5,70 V68.0"/>
<path d="M335.5,70 V59.0"/>
<path d="M339.5,70 V68.0"/>
<path d="M344.5,70 V67.0"/>
<path d="M349.5,70 V68.0"/>
<path d="M354.5,70 V66.0"/>
<path d="M358.5,70 V68.0"/>
<path d="M363.5,70 V67.0"/>
<path d="M368.5,70 V68.0"/>
<path d="M372.5,70 V59.0"/>
<path d="M377.5,70 V68.0"/>
<path d="M382.5,70 V67.0"/>
<path d="M386.5,70 V68.0"/>
<path d="M391.5,70 V66.0"/>
<path d="M396.5,70 V68.0"/>
<path d="M400.5,70 V67.0"/>
<path d="M405.5,70 V68.0"/>
<path d="M410.5,70 V59.0"/>
<path d="M415.5,70 V68.0"/>
<path d="M419.5,70 V67.0"/>
<path d="M424.5,70 V68.0"/>
<path d="M429.5,70 V66.0"/>
<path d="M433.5,70 V68.0"/>
<path d="M438.5,70 V67.0"/>
<path d="M443.5,70 V68.0"/>
<path d="M447.5,70 V59.0"/>
<path d="M452.5,70 V68.0"/>
<path d="M457.5,70 V67.0"/>
<path d="M461.5,70 V68.0"/>
<path d="M466.5,70 V66.0"/>
<path d="M471.5,70 V68.0"/>
<path d="M476.5,70 V67.0"/>
<path d="M480.5,70 V68.0"/>
<path d="M485.5,70 V59.0"/>
<path d="M490.5,70 V68.0"/>
<path d="M494.5,70 V67.0"/>
<path d="M499.5,70 V68.0"/>
<path d="M504.5,70 V66.0"/>
<path d="M508.5,70 V68.0"/>
<path d="M513.5,70 V67.0"/>
<path d="M518.5,70 V68.0"/>
<path d="M522.5,70 V59.0"/>
<path d="M527.5,70 V68.0"/>
<path d="M532.5,70 V67.0"/>
<path d="M537.5,70 V68.0"/>
<path d="M541.5,70 V66.0"/>
<path d="M546.5,70 V68.0"/>
<path d="M551.5,70 V67.0"/>
<path d="M555.5,70 V68.0"/>
<path d="M560.5,70 V59.0"/>
<path d="M565.5,70 V68.0"/>
<path d="M569.5,70 V67.0"/>
<path d="M574.5,70 V68.0"/>
<path d="M579.5,70 V66.0"/>
<path d="M584.5,70 V68.0"/>
<path d="M588.5,70 V67.0"/>
<path d="M593.5,70 V68.0"/>
<path d="M598.5,70 V59.0"/>
<path d="M602.5,70 V68.0"/>
<path d="M607.5,70 V67.0"/>
<path d="M612.5,70 V68.0"/>
<path d="M616.5,70 V66.0"/>
<path d="M621.5,70 V68.0"/>
<path d="M626.5,70 V67.0"/>
<path d="M630.5,70 V68.0"/>
<path d="M635.5,70 V59.0"/>
<path d="M640.5,70 V68.0"/>
<path d="M645.5,70 V67.0"/>
<path d="M649.5,70 V68.0"/>
<path d="M654.5,70 V66.0"/>
<path d="M659.5,70 V68.0"/>
<path d="M663.5,70 V67.0"/>
<path d="M668.5,70 V68.0"/>
<path d="M673.5,70 V59.0"/>
<path d="M677.5,70 V68.0"/>
<path d="M682.5,70 V67.0"/>
<path d="M687.5,70 V68.0"/>
<path d="M691.5,70 V66.0"/>
<path d="M696.5,70 V68.0"/>
<path d="M701.5,70 V67.0"/>
<path d="M706.5,70 V68.0"/>
<path d="M710.5,70 V59.0"/>
<path d="M715.5,70 V68.0"/>
<path d="M720.5,70 V67.0"/>
<path d="M724.5,70 V68.0"/>
<path d="M729.5,70 V66.0"/>
<path d="M734.5,70 V68.0"/>
<path d="M738.5,70 V67.0"/>
<path d="M743.5,70 V68.0"/>
<path d="M748.5,70 V59.0"/>
<path d="M752.5,70 V68.0"/>
<path d="M757.5,70 V67.0"/>
<path d="M762.5,70 V68.0"/>
<path d="M767.5,70 V66.0"/>
<path d="M771.5,70 V68.0"/>
<path d="M776.5,70 V67.0"/>
<path d="M781.5,70 V68.0"/>
<path d="M785.5,70 V59.0"/>
<path d="M790.5,70 V68.0"/>
<path d="M795.5,70 V67.0"/>
<path d="M799.5,70 V68.0"/>
<path d="M804.5,70 V66.0"/>
</g>
<g font-family="Liberation Sans,sans-serif" font-size="7.5" fill="#9c9c9c">
<text x="36.9" y="65.5">6</text>
<text x="74.4" y="65.5">4</text>
<text x="112.0" y="65.5">2</text>
<text x="149.5" y="65.5">0</text>
<text x="187.1" y="65.5">2</text>
<text x="224.6" y="65.5">4</text>
<text x="262.1" y="65.5">6</text>
<text x="299.7" y="65.5">8</text>
<text x="337.2" y="65.5">10</text>
<text x="374.8" y="65.5">12</text>
<text x="412.3" y="65.5">14</text>
<text x="449.9" y="65.5">16</text>
<text x="487.4" y="65.5">18</text>
<text x="525.0" y="65.5">20</text>
<text x="562.5" y="65.5">22</text>
<text x="600.1" y="65.5">24</text>
<text x="637.6" y="65.5">26</text>
<text x="675.2" y="65.5">28</text>
<text x="712.8" y="65.5">30</text>
<text x="750.3" y="65.5">32</text>
<text x="787.8" y="65.5">34</text>
</g>
<rect x="27" y="58" width="11" height="12" fill="#2d2d2d"/><path d="M27.5,58 V70 M27,69.5 H38" stroke="#3c3c3c"/>
</svg></div>
<div class="abs" id="vruler"><svg class="abs" style="left:0;top:0" width="12" height="521" viewBox="27 70 12 521">
<g stroke="#4a4a4a" stroke-width="1">
<path d="M38,74.5 H36.0"/>
<path d="M38,78.5 H34.0"/>
<path d="M38,83.5 H36.0"/>
<path d="M38,88.5 H35.0"/>
<path d="M38,92.5 H36.0"/>
<path d="M38,97.5 H27.0"/>
<path d="M38,102.5 H36.0"/>
<path d="M38,106.5 H35.0"/>
<path d="M38,111.5 H36.0"/>
<path d="M38,116.5 H34.0"/>
<path d="M38,120.5 H36.0"/>
<path d="M38,125.5 H35.0"/>
<path d="M38,130.5 H36.0"/>
<path d="M38,135.5 H27.0"/>
<path d="M38,139.5 H36.0"/>
<path d="M38,144.5 H35.0"/>
<path d="M38,149.5 H36.0"/>
<path d="M38,153.5 H34.0"/>
<path d="M38,158.5 H36.0"/>
<path d="M38,163.5 H35.0"/>
<path d="M38,167.5 H36.0"/>
<path d="M38,172.5 H27.0"/>
<path d="M38,177.5 H36.0"/>
<path d="M38,181.5 H35.0"/>
<path d="M38,186.5 H36.0"/>
<path d="M38,191.5 H34.0"/>
<path d="M38,196.5 H36.0"/>
<path d="M38,200.5 H35.0"/>
<path d="M38,205.5 H36.0"/>
<path d="M38,210.5 H27.0"/>
<path d="M38,214.5 H36.0"/>
<path d="M38,219.5 H35.0"/>
<path d="M38,224.5 H36.0"/>
<path d="M38,228.5 H34.0"/>
<path d="M38,233.5 H36.0"/>
<path d="M38,238.5 H35.0"/>
<path d="M38,243.5 H36.0"/>
<path d="M38,247.5 H27.0"/>
<path d="M38,252.5 H36.0"/>
<path d="M38,257.5 H35.0"/>
<path d="M38,261.5 H36.0"/>
<path d="M38,266.5 H34.0"/>
<path d="M38,271.5 H36.0"/>
<path d="M38,275.5 H35.0"/>
<path d="M38,280.5 H36.0"/>
<path d="M38,285.5 H27.0"/>
<path d="M38,289.5 H36.0"/>
<path d="M38,294.5 H35.0"/>
<path d="M38,299.5 H36.0"/>
<path d="M38,304.5 H34.0"/>
<path d="M38,308.5 H36.0"/>
<path d="M38,313.5 H35.0"/>
<path d="M38,318.5 H36.0"/>
<path d="M38,322.5 H27.0"/>
<path d="M38,327.5 H36.0"/>
<path d="M38,332.5 H35.0"/>
<path d="M38,336.5 H36.0"/>
<path d="M38,341.5 H34.0"/>
<path d="M38,346.5 H36.0"/>
<path d="M38,350.5 H35.0"/>
<path d="M38,355.5 H36.0"/>
<path d="M38,360.5 H27.0"/>
<path d="M38,365.5 H36.0"/>
<path d="M38,369.5 H35.0"/>
<path d="M38,374.5 H36.0"/>
<path d="M38,379.5 H34.0"/>
<path d="M38,383.5 H36.0"/>
<path d="M38,388.5 H35.0"/>
<path d="M38,393.5 H36.0"/>
<path d="M38,397.5 H27.0"/>
<path d="M38,402.5 H36.0"/>
<path d="M38,407.5 H35.0"/>
<path d="M38,411.5 H36.0"/>
<path d="M38,416.5 H34.0"/>
<path d="M38,421.5 H36.0"/>
<path d="M38,426.5 H35.0"/>
<path d="M38,430.5 H36.0"/>
<path d="M38,435.5 H27.0"/>
<path d="M38,440.5 H36.0"/>
<path d="M38,444.5 H35.0"/>
<path d="M38,449.5 H36.0"/>
<path d="M38,454.5 H34.0"/>
<path d="M38,458.5 H36.0"/>
<path d="M38,463.5 H35.0"/>
<path d="M38,468.5 H36.0"/>
<path d="M38,472.5 H27.0"/>
<path d="M38,477.5 H36.0"/>
<path d="M38,482.5 H35.0"/>
<path d="M38,487.5 H36.0"/>
<path d="M38,491.5 H34.0"/>
<path d="M38,496.5 H36.0"/>
<path d="M38,501.5 H35.0"/>
<path d="M38,505.5 H36.0"/>
<path d="M38,510.5 H27.0"/>
<path d="M38,515.5 H36.0"/>
<path d="M38,519.5 H35.0"/>
<path d="M38,524.5 H36.0"/>
<path d="M38,529.5 H34.0"/>
<path d="M38,534.5 H36.0"/>
<path d="M38,538.5 H35.0"/>
<path d="M38,543.5 H36.0"/>
<path d="M38,548.5 H27.0"/>
<path d="M38,552.5 H36.0"/>
<path d="M38,557.5 H35.0"/>
<path d="M38,562.5 H36.0"/>
<path d="M38,566.5 H34.0"/>
<path d="M38,571.5 H36.0"/>
<path d="M38,576.5 H35.0"/>
<path d="M38,580.5 H36.0"/>
<path d="M38,585.5 H27.0"/>
<path d="M38,590.5 H36.0"/>
</g>
<g font-family="Liberation Sans,sans-serif" font-size="7" fill="#9c9c9c">
<text x="29.5" y="104.5">0</text>
<text x="29.5" y="142.1">2</text>
<text x="29.5" y="179.6">4</text>
<text x="29.5" y="217.1">6</text>
<text x="29.5" y="254.7">8</text>
<text x="29.5" y="292.2">1</text>
<text x="29.5" y="299.8">0</text>
<text x="29.5" y="329.8">1</text>
<text x="29.5" y="337.3">2</text>
<text x="29.5" y="367.3">1</text>
<text x="29.5" y="374.8">4</text>
<text x="29.5" y="404.9">1</text>
<text x="29.5" y="412.4">6</text>
<text x="29.5" y="442.4">1</text>
<text x="29.5" y="449.9">8</text>
<text x="29.5" y="480.0">2</text>
<text x="29.5" y="487.5">0</text>
<text x="29.5" y="517.5">2</text>
<text x="29.5" y="525.0">2</text>
<text x="29.5" y="555.1">2</text>
<text x="29.5" y="562.6">4</text>
<text x="29.5" y="592.6">2</text>
<text x="29.5" y="600.1">6</text>
</g>
</svg></div>
<div class="abs" id="toolbar"><div class="abs" id="toolhead"></div><svg class="abs" style="left:0;top:0" width="27" height="572" viewBox="0 45 27 572">
<g fill="#cfcfcf" stroke="none">
<!-- header arrows -->
<path d="M3.5,46.500 L6,49 L3.5,51.500Z M6.5,46.500 L9,49 L6.5,51.500Z" fill="#d8d8d8"/>
<rect x="7" y="58" width="12" height="1" fill="#4a4a4a"/>
<!-- move (selected) -->
<rect x="3" y="63.500" width="20" height="16" rx="1.500" fill="#1f1f1f"/>
<path d="M7,66 L7,75.500 L9.300,73.300 L11,76.500 L12.200,75.900 L10.600,72.800 L13.600,72.600Z" fill="#d6d6d6"/>
<path d="M16.500,70.500 L18,72 L17,72 L17,73.500 L18.500,73.500 L18.500,72.500 L20,74 L18.500,75.500 L18.500,74.500 L17,74.500 L17,76 L18,76 L16.500,77.500 L15,76 L16,76 L16,74.500 L14.500,74.500 L14.500,75.500 L13,74 L14.500,72.500 L14.500,73.500 L16,73.500 L16,72 L15,72Z" fill="#d6d6d6"/>
<!-- marquee -->
<rect x="7.500" y="84" width="10" height="9" fill="none" stroke="#cfcfcf" stroke-width="1.300" stroke-dasharray="2.200 1.300"/>
<!-- lasso -->
<ellipse cx="13" cy="104.500" rx="5.500" ry="3.400" fill="none" stroke="#cfcfcf" stroke-width="1.400" transform="rotate(-18 13 104.500)"/>
<path d="M8.500,106.500 C7.500,108 8,110 9.500,111" fill="none" stroke="#cfcfcf" stroke-width="1.200"/>
<!-- quick select -->
<ellipse cx="11" cy="124" rx="3.600" ry="3" fill="none" stroke="#cfcfcf" stroke-width="1.200" stroke-dasharray="1.600 1"/>
<path d="M11,126.500 L17.500,119 L19,120.300 L12.800,127.800 C11.800,128.800 10,128.300 11,126.500Z"/>
<!-- crop -->
<path d="M9.500,134 L9.500,144 L19.500,144 M6.500,137 L16.500,137 L16.500,147" fill="none" stroke="#cfcfcf" stroke-width="1.700"/>
<!-- eyedropper -->
<path d="M8,164 L8.600,161.600 L14,156.200 L15.800,158 L10.400,163.400Z"/>
<path d="M14,154.500 L17.500,158 L18.800,156.800 C20,155.400 18.600,152.600 16.600,153.200 L15.300,153.300Z"/>
<rect x="4" y="168" width="19" height="1" fill="#2c2c2c"/>
<!-- healing -->
<ellipse cx="12.500" cy="177" rx="5.200" ry="4.600"/>
<path d="M7,172.500 L18,181.500 M18,172.500 L7,181.500 M12.500,171 L12.500,183 M6.500,177 L18.500,177" stroke="#cfcfcf" stroke-width="1" stroke-dasharray="1.200 1"/>
<ellipse cx="12.500" cy="177" rx="2.200" ry="2" fill="#3a3a3a" opacity="0.5"/>
<!-- brush -->
<path d="M18.500,188.500 L19.800,189.600 L12.800,197.300 L11.200,196Z"/>
<path d="M10.800,196.600 L12.300,198 C11.500,200.300 9,200.800 6.500,200.600 C8.500,199.500 8.600,197.500 10.800,196.600Z"/>
<!-- stamp -->
<path d="M11,205.500 C11,203.500 15,203.500 15,205.500 C15,207.200 14,208 14,210 L12,210 C12,208 11,207.200 11,205.500Z"/>
<rect x="7.500" y="210.500" width="11" height="3"/>
<rect x="7" y="215" width="12" height="1.300"/>
<!-- history brush -->
<path d="M17.500,223.500 L18.800,224.600 L12.800,231.300 L11.200,230Z"/>
<path d="M10.800,230.600 L12.300,232 C11.500,234.300 9,234.800 6.500,234.600 C8.500,233.500 8.600,231.500 10.800,230.600Z"/>
<path d="M7.500,228.500 A4.500,4.500 0 0 1 15,224" fill="none" stroke="#cfcfcf" stroke-width="1.200"/>
<path d="M5.800,226.800 L9.300,227.300 L7.300,230Z"/>
<!-- eraser -->
<path d="M6.500,247 L12.500,241 L19,241 L19,244 L13,250 L6.500,250Z"/>
<path d="M6.500,247 L13,247 L19,241" fill="none" stroke="#3a3a3a" stroke-width="0.800"/>
<!-- gradient -->
<defs><linearGradient id="tg" x1="0" y1="0" x2="1" y2="0"><stop offset="0" stop-color="#e6e6e6"/><stop offset="1" stop-color="#4a4a4a"/></linearGradient></defs>
<rect x="7.500" y="258.500" width="11" height="9.500" fill="url(#tg)" stroke="#cfcfcf" stroke-width="1"/>
<!-- blur drop -->
<path d="M12.500,274 C14,277 16.500,279.500 16.500,282 C16.500,287 8.500,287 8.500,282 C8.500,279.500 11,277 12.500,274Z"/>
<!-- dodge -->
<circle cx="11" cy="294.500" r="3.800"/>
<path d="M13.500,297 L17.500,301.500" stroke="#cfcfcf" stroke-width="2"/>
<rect x="4" y="307" width="19" height="1" fill="#2c2c2c"/>
<!-- pen -->
<path d="M8,322.500 L9.500,316.500 L14.500,313 L17.500,316 L14,321 Z"/>
<path d="M15.300,312 L18.500,315.200 L19.800,313.800 L16.700,310.700Z"/>
<circle cx="12.800" cy="317.500" r="1" fill="#3a3a3a"/>
<!-- T -->
<text x="7.300" y="339.500" font-family="Liberation Serif,serif" font-size="15.500" fill="#d4d4d4">T</text>
<!-- path select -->
<path d="M9.500,344.500 L9.500,356 L12.200,353.400 L14,357.500 L15.500,356.800 L13.700,352.800 L17.300,352.500Z"/>
<!-- rectangle -->
<rect x="8" y="364" width="10.500" height="9" fill="#8e8e8e" stroke="#bdbdbd" stroke-width="1"/>
<rect x="4" y="378" width="19" height="1" fill="#2c2c2c"/>
<!-- hand -->
<path d="M8.500,388 C7.500,386.500 6.500,385.500 7.300,384.800 C8.200,384.200 9,385.300 9.800,386.300 L9.500,382.500 C9.500,381.400 10.900,381.400 11,382.500 L11.300,385 L11.500,381.500 C11.600,380.400 13,380.400 13,381.500 L13,385 L13.700,382 C13.900,381 15.300,381.200 15.200,382.300 L14.800,385.600 L15.900,383.700 C16.400,382.800 17.600,383.400 17.200,384.400 C16.500,386.500 16.500,389 15.500,391 C15,392.300 15,393.500 15,394 L10.500,394 C10.500,392 9.500,389.500 8.500,388Z"/>
<!-- zoom -->
<circle cx="11" cy="402" r="3.600" fill="#9a9a9a" stroke="#cfcfcf" stroke-width="1.400"/>
<path d="M13.800,405 L17.800,409.500" stroke="#cfcfcf" stroke-width="2.200"/>
<!-- default/swap small -->
<rect x="3.500" y="416" width="4.500" height="4.500" fill="#1a1a1a" stroke="#cfcfcf" stroke-width="0.800"/>
<rect x="5.800" y="418.200" width="4.500" height="4.500" fill="#e8e8e8" stroke="#cfcfcf" stroke-width="0.800"/>
<path d="M15.500,417 C18,415.500 20.500,417 20.500,420" fill="none" stroke="#cfcfcf" stroke-width="1.200"/>
<path d="M14,417 L16.800,415 L16.800,419Z M20.500,422 L18.600,419.500 L22.400,419.500Z"/>
<!-- colors -->
<rect x="9.500" y="433" width="12.500" height="12" fill="#ffffff" stroke="#d8d8d8" stroke-width="0.600"/>
<rect x="3" y="425.500" width="12.500" height="12.500" fill="#ea1318" stroke="#e8e8e8" stroke-width="1"/>
<!-- quick mask -->
<rect x="6.500" y="450" width="11.500" height="9" fill="none" stroke="#cfcfcf" stroke-width="1.200"/>
<circle cx="12.200" cy="454.500" r="2.700" fill="none" stroke="#cfcfcf" stroke-width="1.200"/>
<!-- screen mode -->
<rect x="9" y="468.500" width="9" height="6" fill="#8a8a8a" stroke="#cfcfcf" stroke-width="1"/>
<rect x="6.500" y="471.500" width="8" height="5.500" fill="#5a5a5a" stroke="#cfcfcf" stroke-width="1"/>
<!-- corner triangles -->
<g fill="#bdbdbd">
<path d="M21,95.500 L21,98 L18.500,98Z M21,113 L21,115.500 L18.500,115.500Z M21,130 L21,132.500 L18.500,132.500Z M21,147 L21,149.500 L18.500,149.500Z M21,164.500 L21,167 L18.500,167Z M21,184 L21,186.500 L18.500,186.500Z M21,201.500 L21,204 L18.500,204Z M21,218.500 L21,221 L18.500,221Z M21,236 L21,238.500 L18.500,238.500Z M21,253 L21,255.500 L18.500,255.500Z M21,270 L21,272.500 L18.500,272.500Z M21,287 L21,289.500 L18.500,289.500Z M21,304 L21,306.500 L18.500,306.500Z M21,323 L21,325.500 L18.500,325.500Z M21,340.500 L21,343 L18.500,343Z M21,358 L21,360.500 L18.500,360.500Z M21,375 L21,377.500 L18.500,377.500Z M21,394 L21,396.500 L18.500,396.500Z M21,477.500 L21,480 L18.500,480Z"/>
</g>
</g>
</svg>
</div>
<div class="abs" id="statusbar"><div class="abs" style="left:0;top:0;width:30px;height:12px;background:#232323"></div>
<span class="abs" style="left:2px;top:3px;font-size:7.5px;color:#dadada;letter-spacing:-0.2px">100%</span>
<div class="abs" style="left:30px;top:0;width:138px;height:12px;background:#393939"></div>
<svg class="abs" style="left:35px;top:2px" width="9" height="9" viewBox="0 0 9 9"><circle cx="4.500" cy="4.500" r="3.800" fill="#c6c6c6"/><path d="M4.500,4.500 L4.500,1.500 A3,3 0 0 1 7.200,5.800Z" fill="#393939"/></svg>
<span class="abs" style="left:73px;top:2.500px;font-size:7.500px;color:#dcdcdc;white-space:nowrap;letter-spacing:-0.1px">文档:1.68M/3.16M</span>
<svg class="abs" style="left:163px;top:3px" width="5" height="7" viewBox="0 0 5 7"><path d="M0.500,0.500 L4.500,3.500 L0.500,6.500Z" fill="#dcdcdc"/></svg>
</div>
<div class="abs" id="timeline"><div class="abs" style="left:0;top:0;width:31px;height:12px;background:#363636"></div><span class="abs" style="left:5px;top:2px;font-size:7.5px;color:#9c9c9c;white-space:nowrap">时间轴</span><svg class="abs" style="left:779px;top:3px" width="12" height="7" viewBox="0 0 12 7"><path d="M0,2 L4,2 L2,4.500Z" fill="#bdbdbd"/><rect x="5" y="1" width="6" height="5" fill="#bdbdbd"/></svg></div><div class="abs" style="left:809px;top:592.500px;width:9.500px;height:10px;background:#3a3a3a"></div>
<div class="abs" id="vscroll"></div>
<div class="abs" id="dock"><svg class="abs" style="left:0;top:0" width="39" height="572" viewBox="819 45 39 572">
<rect x="819" y="45" width="39" height="9" fill="#232323"/>
<path d="M839.500,46.500 L837,49 L839.500,51.500Z M843,46.500 L840.500,49 L843,51.500Z" fill="#d0d0d0"/>
<!-- columns -->
<rect x="820" y="54" width="24.500" height="563" fill="#333333"/>
<rect x="846" y="54" width="12" height="563" fill="#303030"/>
<rect x="846" y="54" width="12" height="44" fill="#363636"/>
<!-- group separators -->
<g fill="#222222">
<rect x="820" y="98" width="24.500" height="1.500"/><rect x="820" y="125" width="24.500" height="1.500"/><rect x="820" y="152" width="24.500" height="1.500"/><rect x="820" y="199.500" width="24.500" height="1.500"/><rect x="820" y="246" width="24.500" height="1.500"/><rect x="820" y="309.500" width="24.500" height="1.500"/><rect x="820" y="355" width="24.500" height="1.500"/>
<rect x="846" y="98" width="12" height="1.500"/>
</g>
<!-- grips -->
<g fill="#4a4a4a">
<rect x="827" y="56.500" width="11" height="1"/><rect x="827" y="101.500" width="11" height="1"/><rect x="827" y="128.500" width="11" height="1"/><rect x="827" y="155.500" width="11" height="1"/><rect x="827" y="203" width="11" height="1"/><rect x="827" y="249.500" width="11" height="1"/><rect x="827" y="313" width="11" height="1"/><rect x="849" y="56.500" width="9" height="1"/>
</g>
<!-- active layers button -->
<rect x="822.500" y="268.500" width="20" height="19" rx="1.500" fill="#1f1f1f"/>
<g fill="#cdcdcd">
<!-- palette -->
<path d="M833,64.500 C829.500,64.500 826.500,66.800 826.500,69.800 C826.500,72.500 829,74.300 831,74.300 C832.500,74.300 832.300,72.800 833.300,72.300 C834.300,71.800 835.500,72.800 837,72.500 C839,72 840,70.500 840,69 C840,66.300 837,64.500 833,64.500Z"/>
<g fill="#333"><circle cx="830" cy="68" r="1"/><circle cx="833.500" cy="66.800" r="1"/><circle cx="836.800" cy="68.200" r="1"/><circle cx="829.800" cy="71.300" r="1"/></g>
<!-- swatches -->
<rect x="827" y="82" width="12" height="10"/>
<g fill="#333"><rect x="828.500" y="85" width="2.300" height="2.200"/><rect x="831.900" y="85" width="2.300" height="2.200"/><rect x="835.300" y="85" width="2.300" height="2.200"/><rect x="828.500" y="88.400" width="2.300" height="2.200"/><rect x="831.900" y="88.400" width="2.300" height="2.200"/><rect x="835.300" y="88.400" width="2.300" height="2.200"/></g>
<!-- clone source -->
<rect x="826.500" y="109" width="2" height="2"/><rect x="829.300" y="109" width="2" height="2"/><rect x="826.500" y="111.800" width="2" height="2"/><rect x="829.300" y="111.800" width="2" height="2"/><rect x="826.500" y="114.600" width="2" height="2"/>
<path d="M833.500,111.500 C833.500,109.800 837,109.800 837,111.500 C837,113 836.200,113.500 836.200,115.500 L834.300,115.500 C834.300,113.500 833.500,113 833.500,111.500Z"/><rect x="831" y="116" width="8.500" height="2.200"/><rect x="830.500" y="119.200" width="9.500" height="1.100"/>
<!-- tool presets (crossed) -->
<path d="M827.500,136 L829,134.800 L838.500,146 L837,147.200Z"/><path d="M838.500,135.500 L839.800,136.800 L829.300,147.500 L827.800,147.800 L828,146.300Z"/>
<circle cx="828.500" cy="136" r="2"/><path d="M836.500,145 L839.500,144.500 L840,147.500 L837.500,148Z"/>
<!-- brush presets -->
<path d="M830,170 L836,170 L835.500,176 L830.500,176Z"/><path d="M829,163 L830.500,169.500 M833,162 L833,169.500 M837,163 L835.500,169.500" stroke="#cdcdcd" stroke-width="1.300" fill="none"/><circle cx="829" cy="162.500" r="1.200"/><circle cx="833" cy="161.500" r="1.200"/><circle cx="837" cy="162.500" r="1.200"/>
<!-- brush -->
<path d="M827,184 L837,184 L837,185.300 L827,185.300Z"/><ellipse cx="829" cy="184.600" rx="2.500" ry="1.800"/><path d="M827,191 L837,191 L837,192.300 L827,192.300Z"/><ellipse cx="836.500" cy="191.600" rx="2.500" ry="1.800"/>
<!-- history -->
<rect x="828" y="208.500" width="3.500" height="12" fill="none" stroke="#cdcdcd" stroke-width="1"/><rect x="829" y="210" width="1.500" height="2"/><rect x="829" y="213.500" width="1.500" height="2"/><rect x="829" y="217" width="1.500" height="2"/>
<path d="M834,211 C838,209.500 839.500,213.500 837,217 L835,219.500" fill="none" stroke="#cdcdcd" stroke-width="1.300"/><path d="M833,209 L836.500,209.300 L834.500,212.500Z"/>
<!-- actions play -->
<path d="M828,228 L839.500,233.500 L828,239Z"/>
<!-- 3d cube -->
<path d="M833,253.500 L838.500,256 L838.500,262.500 L833,265.500 L827.500,262.500 L827.500,256Z"/>
<path d="M827.500,256 L833,258.800 L838.500,256 M833,258.800 L833,265.500" fill="none" stroke="#333" stroke-width="0.900"/>
<!-- layers -->
<path d="M833,272 L840,275.500 L833,279 L826,275.500Z"/><path d="M827.500,278.300 L826,279 L833,282.500 L840,279 L838.500,278.300 L833,281Z"/><path d="M827.500,281.300 L826,282 L833,285.500 L840,282 L838.500,281.300 L833,284Z"/>
<!-- channels -->
<circle cx="833" cy="294" r="3.600"/><circle cx="830.300" cy="298.500" r="3.600"/><circle cx="835.700" cy="298.500" r="3.600"/>
<g fill="none" stroke="#333" stroke-width="0.700"><circle cx="833" cy="294" r="3.600"/><circle cx="830.300" cy="298.500" r="3.600"/><circle cx="835.700" cy="298.500" r="3.600"/></g>
<!-- paragraph etc -->
<rect x="838.800" y="319.500" width="1" height="10.500"/>
<path d="M830.500,337.500 L836.500,337.500 L836.500,338.700 L835.600,338.700 L835.600,346.500 L834.500,346.500 L834.500,338.700 L833.400,338.700 L833.400,346.500 L832.300,346.500 L832.300,342.300 C829.500,342.300 829,337.500 830.500,337.500Z"/>
<!-- col 2 partial -->
<path d="M851,66 C853,64 858,64 858,64 L858,74 L851,74Z"/><rect x="850.500" y="70" width="8" height="1" fill="#333"/>
<circle cx="856" cy="87" r="5"/>
</g>
<text x="827.500" y="329" font-family="Liberation Sans,sans-serif" font-size="11" fill="#cdcdcd">A</text>
</svg>
</div>
<div class="abs" id="layers"><style>
#layers{font-size:8px;color:#dcdcdc}
#layers .t{position:absolute;white-space:nowrap;line-height:10px}
#ltabs{position:absolute;left:0;top:0;width:159px;height:13px;background:#242424;border-top:3px solid #19191b}
#ltab2{position:absolute;left:19px;top:0;width:25px;height:10px;background:#3c3c3c}
.dd{position:absolute;background:linear-gradient(#3e3e3e,#343434);border:1px solid #222;border-radius:2px;box-shadow:0 1px 0 #454545}
.vb{position:absolute;background:#1f1f1f;border:1px solid #181818;color:#e8e8e8;font-size:8px;line-height:10px;text-align:center;letter-spacing:-0.3px}
.ab{position:absolute;background:linear-gradient(#4e4e4e,#414141);border:1px solid #262626;border-radius:1px}
.ab:after{content:"";position:absolute;left:3px;top:4px;border:2.5px solid transparent;border-top:3px solid #d8d8d8}
.lrow{position:absolute;left:1px;width:148px;background:#373737;border-bottom:1px solid #262626}
.eyecol{position:absolute;left:0;top:0;width:18px;height:100%;background:#2f302f;border-right:1px solid #262626}
.eye{position:absolute;left:3px;width:11px;height:7px}
.thumb{position:absolute;background:#fff;overflow:hidden}
</style>
<div class="abs" style="left:0;top:13px;width:158px;height:55px;background:#333334"></div>
<div id="ltabs">
  <div id="ltab2"></div>
  <span class="t" style="left:4px;top:0px;color:#6f6f6f;font-size:8px">3D</span>
  <span class="t" style="left:23px;top:0px;color:#e4e4e4;font-size:7.5px">图层</span>
  <span class="t" style="left:49px;top:0px;color:#858585;font-size:7.5px">通道</span>
  <svg class="abs" style="left:132px;top:2px" width="26" height="7" viewBox="0 0 26 7"><path d="M0,0.5 L3,3.5 L0,6.5Z M3.5,0.5 L6.5,3.5 L3.5,6.5Z" fill="#b2b2b2"/><rect x="10.5" y="0" width="1" height="7" fill="#444"/><path d="M13,2 L17,2 L15,4.5Z" fill="#b2b2b2"/><rect x="17.5" y="1" width="5.5" height="5" fill="#bdbdbd"/></svg>
</div>
<!-- row1 filter -->
<div class="dd" style="left:3px;top:16px;width:46px;height:12px"></div>
<svg class="abs" style="left:7px;top:18px" width="8" height="8" viewBox="0 0 8 8"><circle cx="4.6" cy="3.2" r="2.2" fill="none" stroke="#d0d0d0" stroke-width="1.2"/><path d="M3,4.8 L0.8,7.2" stroke="#d0d0d0" stroke-width="1.4"/></svg>
<span class="t" style="left:17px;top:17px;font-size:8px;color:#e0e0e0">类型</span>
<svg class="abs" style="left:40px;top:18px" width="5" height="8" viewBox="0 0 5 8"><path d="M0.3,3 L2.5,0.5 L4.7,3Z M0.3,5 L2.5,7.5 L4.7,5Z" fill="#d0d0d0"/></svg>
<svg class="abs" style="left:63px;top:17px" width="76" height="11" viewBox="0 0 76 11">
  <rect x="1" y="1.5" width="9" height="7.5" fill="none" stroke="#c8c8c8" stroke-width="1.2"/><path d="M2,8 L4.5,5 L6,6.5 L7.5,5.5 L9,8Z" fill="#c8c8c8"/><rect x="6.5" y="3" width="1.6" height="1.4" fill="#c8c8c8"/>
  <circle cx="20.5" cy="5.3" r="3.6" fill="#c8c8c8"/><path d="M18,7.8 A3.6,3.6 0 0 1 23,2.8Z" fill="#444"/>
  <text x="32" y="9.3" font-family="Liberation Serif,serif" font-size="10.5" font-weight="bold" fill="#d0d0d0">T</text>
  <path d="M49.5,2 L55.5,2 L55.5,8.5 L49.5,8.5Z" fill="none" stroke="#c8c8c8" stroke-width="1"/><rect x="48.3" y="1" width="2.2" height="2.2" fill="#c8c8c8"/><rect x="54.5" y="1" width="2.2" height="2.2" fill="#c8c8c8"/><rect x="48.3" y="7.4" width="2.2" height="2.2" fill="#c8c8c8"/><rect x="54.5" y="7.4" width="2.2" height="2.2" fill="#c8c8c8"/>
  <path d="M66,1.5 L70.5,1.5 L72.5,3.5 L72.5,9.5 L66,9.5Z" fill="#c8c8c8"/><rect x="64" y="5.5" width="5" height="4" fill="#c8c8c8" stroke="#333" stroke-width="0.7"/><path d="M65.2,5.5 L65.2,4.3 A1.3,1.3 0 0 1 67.8,4.3 L67.8,5.5" fill="none" stroke="#c8c8c8" stroke-width="0.9"/>
</svg>
<div class="abs" style="left:150px;top:17px;width:6px;height:11px;background:linear-gradient(#707070 0,#707070 45%,#262626 45%,#262626 100%);border:1px solid #222"></div>
<!-- row2 blend -->
<div class="dd" style="left:3px;top:34px;width:73px;height:13px"></div>
<span class="t" style="left:9px;top:35px;font-size:8px;color:#e4e4e4">正常</span>
<svg class="abs" style="left:67px;top:37px" width="5" height="8" viewBox="0 0 5 8"><path d="M0.3,3 L2.5,0.5 L4.7,3Z M0.3,5 L2.5,7.5 L4.7,5Z" fill="#d0d0d0"/></svg>
<span class="t" style="left:81px;top:35px;font-size:8px;color:#e0e0e0;letter-spacing:-0.6px">不透明度:</span>
<div class="vb" style="left:119px;top:34px;width:23px;height:13px;padding-top:1px">100%</div>
<div class="ab" style="left:143px;top:34px;width:13px;height:13px"></div>
<!-- row3 lock -->
<span class="t" style="left:3px;top:53px;font-size:8px;color:#e0e0e0;letter-spacing:-0.3px">锁定:</span>
<svg class="abs" style="left:27px;top:52px" width="56" height="12" viewBox="0 0 56 12">
  <rect x="1.5" y="2" width="8" height="8" fill="#555" stroke="#c8c8c8" stroke-width="1"/><path d="M2,2.5h2.3v2.3h-2.3z M6.6,2.5h2.3v2.3h-2.3z M4.3,4.8h2.3v2.3h-2.3z M2,7.1h2.3v2.3h-2.3z M6.6,7.1h2.3v2.3h-2.3z" fill="#d8d8d8"/>
  <path d="M25.5,1 L26.5,2 L20.5,8 L19,7Z" fill="#d8d8d8"/><path d="M19.5,6.5 L21,8 C20,10.5 17.5,10.5 15.5,10.5 C17.5,9.5 17.5,7.5 19.5,6.5Z" fill="#d8d8d8"/>
  <path d="M35.5,0.8 L37.4,3 L36,3 L36,5.5 L38.5,5.5 L38.5,4.1 L40.7,6 L38.5,7.9 L38.5,6.5 L36,6.5 L36,9 L37.4,9 L35.5,11.2 L33.6,9 L35,9 L35,6.5 L32.5,6.5 L32.5,7.9 L30.3,6 L32.5,4.1 L32.5,5.5 L35,5.5 L35,3 L33.6,3Z" fill="#d8d8d8"/>
  <rect x="47" y="5.5" width="7" height="5" rx="0.6" fill="#d8d8d8"/><path d="M48.5,5.5 L48.5,3.8 A2,2 0 0 1 52.5,3.8 L52.5,5.5" fill="none" stroke="#d8d8d8" stroke-width="1.2"/>
</svg>
<span class="t" style="left:97px;top:53px;font-size:8px;color:#e0e0e0;letter-spacing:-0.3px">填充:</span>
<div class="vb" style="left:119px;top:53px;width:23px;height:12px;padding-top:1px">100%</div>
<div class="ab" style="left:143px;top:53px;width:13px;height:12px"></div>
<!-- layer rows -->
<div class="lrow" style="top:68px;height:26px;background:#4a5876">
  <div class="eyecol"></div>
  <svg class="eye" style="top:9px" viewBox="0 0 11 7"><path d="M0.3,3.6 C2.5,0.3 8.5,0.3 10.7,3.6 C8.5,6.8 2.5,6.8 0.3,3.6Z" fill="#a9a9a9"/><circle cx="5.5" cy="3.3" r="1.9" fill="#2f302f"/><circle cx="6.2" cy="2.7" r="0.7" fill="#a9a9a9"/></svg>
  <div class="thumb" style="left:20px;top:2px;width:24px;height:21.500px;background:#fff;border:1px solid #e8e8e8;box-shadow:inset 0 0 0 1px #3b4660">
    <div style="position:absolute;left:2px;top:2px;width:20px;height:17px;background-color:#fff;background-image:linear-gradient(45deg,#d2d2d2 25%,transparent 25%,transparent 75%,#d2d2d2 75%),linear-gradient(45deg,#d2d2d2 25%,transparent 25%,transparent 75%,#d2d2d2 75%);background-size:4px 4px;background-position:0 0,2px 2px"></div>
  </div>
  <span class="t" style="left:49px;top:8px;font-size:8px;color:#eeeeee">图层 2</span>
</div>
<div class="lrow" style="top:94px;height:23px">
  <div class="eyecol"></div>
  <svg class="eye" style="top:8px" viewBox="0 0 11 7"><path d="M0.3,3.6 C2.5,0.3 8.5,0.3 10.7,3.6 C8.5,6.8 2.5,6.8 0.3,3.6Z" fill="#a9a9a9"/><circle cx="5.5" cy="3.3" r="1.9" fill="#2f302f"/><circle cx="6.2" cy="2.7" r="0.7" fill="#a9a9a9"/></svg>
  <div class="thumb" style="left:21.500px;top:2px;width:20px;height:17px"><svg width="20" height="17" viewBox="147 97 551 468" style="position:absolute;left:0;top:0"><rect x="147" y="97" width="551" height="468" fill="#fff"/><path d="M160,565 L175,480 L292,442 L352,565Z M583,485 L680,535 L698,565 L560,565 L602,496Z" fill="#f2efee"/><path d="M350,340 L364,400 L291,443 L350,566 L564,566 L601,496 L520,445 L500,380 L517,319Z" fill="#efc09b"/><path d="M349,97 C300,150 290,240 324,288 L522,310 C600,250 590,150 540,97Z" fill="#e3b47a"/><path d="M327,200 C330,150 370,120 406,130 L517,303 L506,354 C480,395 400,420 362,377 C335,340 322,280 327,200Z" fill="#f3cba9"/><path d="M373,338 L457,336 C440,372 390,372 373,338Z" fill="#d9907f"/></svg>
</div>
  <span class="t" style="left:49px;top:7px;font-size:8px;color:#e8e8e8">图层 1</span>
</div>
<div class="lrow" style="top:117px;height:23px">
  <div class="eyecol"></div>
  <svg class="eye" style="top:8px" viewBox="0 0 11 7"><path d="M0.3,3.6 C2.5,0.3 8.5,0.3 10.7,3.6 C8.5,6.8 2.5,6.8 0.3,3.6Z" fill="#a9a9a9"/><circle cx="5.5" cy="3.3" r="1.9" fill="#2f302f"/><circle cx="6.2" cy="2.7" r="0.7" fill="#a9a9a9"/></svg>
  <div class="thumb" style="left:21.500px;top:2px;width:20px;height:17px"><svg width="20" height="17" viewBox="147 97 551 468" style="position:absolute;left:0;top:0"><rect x="147" y="97" width="551" height="468" fill="#fff"/><path d="M160,565 L175,480 L292,442 L352,565Z M583,485 L680,535 L698,565 L560,565 L602,496Z" fill="#f2efee"/><path d="M350,340 L364,400 L291,443 L350,566 L564,566 L601,496 L520,445 L500,380 L517,319Z" fill="#efc09b"/><path d="M349,97 C300,150 290,240 324,288 L522,310 C600,250 590,150 540,97Z" fill="#e3b47a"/><path d="M327,200 C330,150 370,120 406,130 L517,303 L506,354 C480,395 400,420 362,377 C335,340 322,280 327,200Z" fill="#f3cba9"/><path d="M373,338 L457,336 C440,372 390,372 373,338Z" fill="#d9907f"/></svg>
</div>
  <span class="t" style="left:50px;top:7px;font-size:8px;color:#e8e8e8;font-style:italic;transform:skewX(-12deg)">背景</span>
  <svg class="abs" style="left:130px;top:6px" width="8" height="10" viewBox="0 0 8 10"><rect x="0.8" y="4.2" width="6.4" height="5" fill="none" stroke="#c4c4c4" stroke-width="1.1"/><path d="M2.2,4.2 L2.2,2.8 A1.8,1.8 0 0 1 5.8,2.8 L5.8,4.2" fill="none" stroke="#c4c4c4" stroke-width="1.1"/><rect x="3.4" y="6" width="1.2" height="1.8" fill="#c4c4c4"/></svg>
</div>
<div class="abs" style="left:150px;top:68px;width:8px;height:199px;background:#353535;border-left:1px solid #262626"></div>
<!-- red highlight -->
<div class="abs" style="left:0px;top:65px;width:153px;height:32px;border:3px solid #f23a3a;z-index:5"></div>
<!-- bottom bar -->
<div class="abs" style="left:0;top:279.500px;width:158px;height:4px;background:#1f1f20"></div><div class="abs" style="left:74px;top:281px;width:10px;height:1px;background:#3a3a3a"></div><div class="abs" style="left:0;top:267px;width:158px;height:13px;background:#373738;border-top:1px solid #272727">
<svg class="abs" style="left:24px;top:1px" width="120" height="11" viewBox="0 0 120 11">
  <g fill="none" stroke="#727272" stroke-width="1.1"><rect x="1" y="3.5" width="5" height="4" rx="2"/><rect x="4.5" y="3.5" width="5" height="4" rx="2"/></g>
  <text x="20.5" y="9" font-family="Liberation Serif,serif" font-style="italic" font-size="10" fill="#c4c4c4">fx</text><rect x="29.5" y="8" width="1.3" height="1.3" fill="#d4d4d4"/>
  <rect x="36.5" y="2" width="9" height="7.5" fill="#b2b2b2"/><circle cx="41" cy="5.8" r="2.2" fill="#393939"/>
  <circle cx="59" cy="5.5" r="3.7" fill="#b2b2b2"/><path d="M56.5,8.1 A3.7,3.7 0 0 1 61.6,2.9Z" fill="#393939" opacity="0.8"/><rect x="64" y="8.2" width="1.3" height="1.3" fill="#b2b2b2"/>
  <path d="M72,2 L75.5,2 L76.5,3.2 L81,3.2 L81,9 L72,9Z" fill="#b2b2b2"/>
  <path d="M91,2 L98,2 L98,9 L94,9 L94,6 L91,6Z" fill="#b2b2b2"/><path d="M91,6.8 L93.2,6.8 L93.2,9Z" fill="#b2b2b2"/>
  <path d="M108.5,3.8 L115.5,3.8 L114.8,9.8 L109.2,9.8Z" fill="#b2b2b2"/><rect x="107.8" y="2.2" width="8.4" height="1.2" fill="#b2b2b2"/><rect x="110.5" y="1" width="3" height="1.2" fill="#b2b2b2"/>
</svg>
</div>
</div>
<div class="abs" id="bottom"></div>
<div class="abs" style="left:0;top:1px;width:1px;height:618px;background:#8c8c8c"></div>
</body>
</html>
